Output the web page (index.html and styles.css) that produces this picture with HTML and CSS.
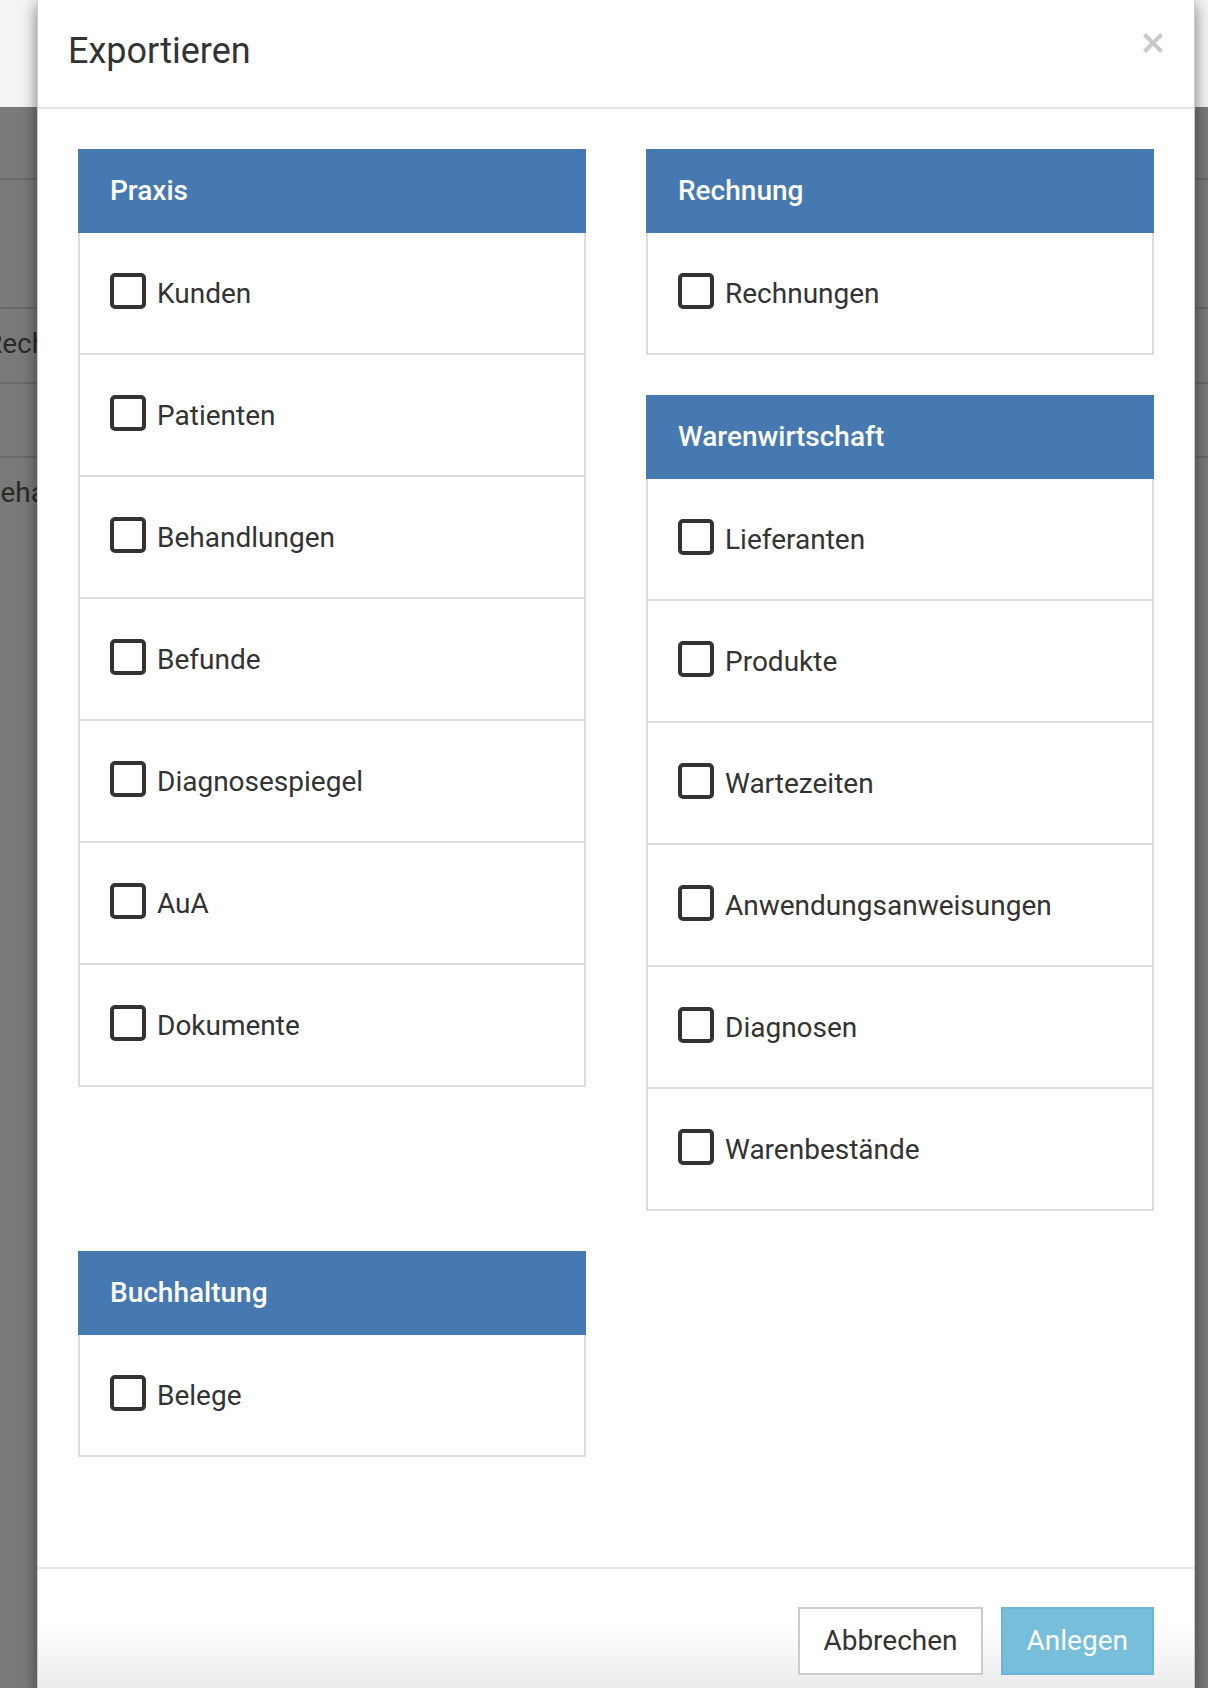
FILE: index.html
```html
<!DOCTYPE html>
<html lang="de">
<head>
<meta charset="utf-8">
<title>Exportieren</title>
<link rel="stylesheet" href="styles.css">
</head>
<body>
<div class="page">
  <div class="backdrop backdrop-left">
    <div class="bd-top"></div>
    <div class="bd-main">
      <div class="bd-row r1"></div>
      <div class="bd-row r2"></div>
      <div class="bd-row r3"><span class="bd-text t1">Rechnungen</span></div>
      <div class="bd-row r4"></div>
      <div class="bd-row r5"><span class="bd-text t2">Behandlungen</span></div>
    </div>
  </div>

  <div class="modal">
    <div class="modal-header">
      <h4 class="modal-title">Exportieren</h4>
      <button class="close" type="button" aria-label="Schließen">
        <svg width="20" height="20" viewBox="0 0 20 20"><path d="M1.5 1.5 L18.5 18.5 M18.5 1.5 L1.5 18.5" stroke="#c9c9c9" stroke-width="4" fill="none"/></svg>
      </button>
    </div>

    <div class="modal-body">
      <div class="grid">
        <div class="col">
          <section class="panel">
            <div class="panel-heading">Praxis</div>
            <ul class="panel-list">
              <li class="item"><label class="check"><input type="checkbox" class="cb"><span>Kunden</span></label></li>
              <li class="item"><label class="check"><input type="checkbox" class="cb"><span>Patienten</span></label></li>
              <li class="item"><label class="check"><input type="checkbox" class="cb"><span>Behandlungen</span></label></li>
              <li class="item"><label class="check"><input type="checkbox" class="cb"><span>Befunde</span></label></li>
              <li class="item"><label class="check"><input type="checkbox" class="cb"><span>Diagnosespiegel</span></label></li>
              <li class="item"><label class="check"><input type="checkbox" class="cb"><span>AuA</span></label></li>
              <li class="item"><label class="check"><input type="checkbox" class="cb"><span>Dokumente</span></label></li>
            </ul>
          </section>
        </div>
        <div class="col">
          <section class="panel">
            <div class="panel-heading">Rechnung</div>
            <ul class="panel-list">
              <li class="item"><label class="check"><input type="checkbox" class="cb"><span>Rechnungen</span></label></li>
            </ul>
          </section>
          <section class="panel">
            <div class="panel-heading">Warenwirtschaft</div>
            <ul class="panel-list">
              <li class="item"><label class="check"><input type="checkbox" class="cb"><span>Lieferanten</span></label></li>
              <li class="item"><label class="check"><input type="checkbox" class="cb"><span>Produkte</span></label></li>
              <li class="item"><label class="check"><input type="checkbox" class="cb"><span>Wartezeiten</span></label></li>
              <li class="item"><label class="check"><input type="checkbox" class="cb"><span>Anwendungsanweisungen</span></label></li>
              <li class="item"><label class="check"><input type="checkbox" class="cb"><span>Diagnosen</span></label></li>
              <li class="item"><label class="check"><input type="checkbox" class="cb"><span>Warenbestände</span></label></li>
            </ul>
          </section>
        </div>
      </div>
      <div class="grid">
        <div class="col">
          <section class="panel">
            <div class="panel-heading">Buchhaltung</div>
            <ul class="panel-list">
              <li class="item"><label class="check"><input type="checkbox" class="cb"><span>Belege</span></label></li>
            </ul>
          </section>
        </div>
      </div>
    </div>

    <div class="modal-footer">
      <button class="btn btn-default" type="button">Abbrechen</button>
      <button class="btn btn-info" type="button">Anlegen</button>
    </div>
  </div>

  <div class="backdrop backdrop-right">
    <div class="bd-top"></div>
    <div class="bd-main">
      <div class="bd-row r1"></div>
      <div class="bd-row r2"></div>
      <div class="bd-row r3"></div>
      <div class="bd-row r4"></div>
      <div class="bd-row r5"></div>
    </div>
  </div>
</div>
</body>
</html>
```

FILE: styles.css
```css
* {
  box-sizing: border-box;
}

html,
body {
  margin: 0;
  padding: 0;
}

body {
  font-family: Roboto, "Noto Sans", "Liberation Sans", sans-serif;
  color: #333;
  background: #7a7a7a;
}

.page {
  display: flex;
  width: 1208px;
  height: 1688px;
  overflow: hidden;
}

/* backdrop (page behind the modal) */
.backdrop {
  display: flex;
  flex-direction: column;
  overflow: hidden;
}

.backdrop-left {
  width: 37px;
  flex: none;
}

.backdrop-right {
  flex: 1;
}

.bd-top {
  height: 107px;
  background: #f4f4f4;
}

.bd-main {
  flex: 1;
  background: #7a7a7a;
}

.bd-row {
  border-bottom: 2px solid #6a6a6a;
}

.r1 { height: 73px; }
.r2 { height: 129px; }
.r3 { height: 75px; }
.r4 { height: 74px; }
.r5 { border-bottom: 0; }

.bd-text {
  display: block;
  white-space: nowrap;
  font-size: 28px;
  line-height: 28px;
  color: #2a2a2a;
}

.t1 {
  padding-top: 21px;
  margin-left: -15px;
}

.t2 {
  padding-top: 21px;
  margin-left: -17px;
}

/* modal */
.modal {
  position: relative;
  z-index: 1;
  width: 1158px;
  flex: none;
  display: flex;
  flex-direction: column;
  background: #fff;
  border-left: 1px solid rgba(0, 0, 0, 0.2);
  border-right: 1px solid rgba(0, 0, 0, 0.2);
  box-shadow: 0 5px 15px rgba(0, 0, 0, 0.5);
}

.modal-header {
  height: 109px;
  flex: none;
  display: flex;
  justify-content: space-between;
  align-items: flex-start;
  padding: 0 31px 0 30px;
  border-bottom: 2px solid #e5e5e5;
}

.modal-title {
  margin: 33px 0 0;
  font-size: 36px;
  line-height: 36px;
  font-weight: 400;
  color: #333;
}

.close {
  margin-top: 33px;
  width: 20px;
  height: 20px;
  padding: 0;
  border: 0;
  background: none;
  display: block;
}

.close svg {
  display: block;
}

.modal-body {
  flex: none;
  padding: 40px 40px 110px;
}

.grid {
  display: grid;
  grid-template-columns: 508px 508px;
  column-gap: 60px;
  align-items: start;
}

.grid + .grid {
  margin-top: 40px;
}

.col {
  display: flex;
  flex-direction: column;
  gap: 40px;
}

.panel-heading {
  height: 84px;
  display: flex;
  align-items: center;
  padding: 0 32px 1px;
  background: #4679b2;
  color: #fff;
  font-size: 28px;
  font-weight: 500;
}

.panel-list {
  list-style: none;
  margin: 0;
  padding: 0;
  border: 2px solid #ddd;
  border-top: 0;
}

.item {
  height: 122px;
  display: flex;
  align-items: center;
  padding-left: 30px;
  border-bottom: 2px solid #ddd;
}

.item:last-child {
  height: 120px;
  border-bottom: 0;
}

.check {
  display: flex;
  align-items: center;
  gap: 11px;
  font-size: 28px;
  color: #333;
}

.cb {
  -webkit-appearance: none;
  appearance: none;
  flex: none;
  width: 36px;
  height: 36px;
  margin: 0 0 4px;
  border: 4px solid #333;
  border-radius: 5px;
  background: #fff;
}

/* footer */
.modal-footer {
  flex: 1;
  display: flex;
  justify-content: flex-end;
  align-items: flex-start;
  gap: 18px;
  padding: 38px 40px 0;
  border-top: 2px solid #e5e5e5;
  background: linear-gradient(to bottom, #fff 0, #fff 54px, #ebebeb 100%);
}

.btn {
  height: 68px;
  padding: 0 24px;
  font-family: inherit;
  font-size: 28px;
  line-height: 1;
  border: 2px solid;
  border-radius: 0;
}

.btn-default {
  padding: 0 23px;
  background: #fff;
  border-color: #ccc;
  color: #333;
}

.btn-info {
  background: #77bedb;
  border-color: #6cb5d5;
  color: #fff;
}
```
